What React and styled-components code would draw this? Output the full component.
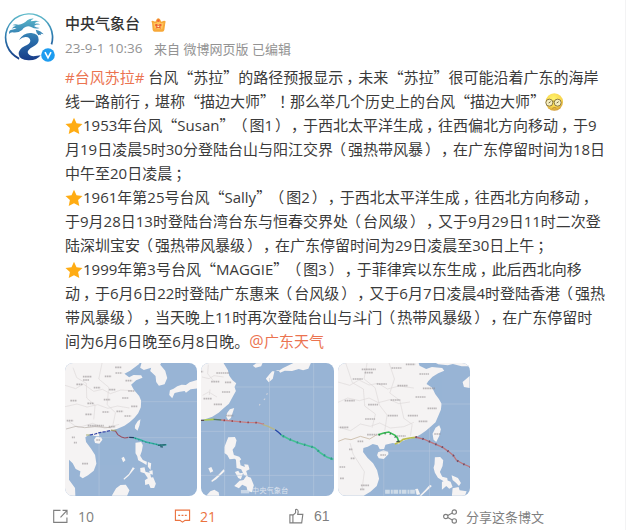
/* eslint-disable react/prop-types */
import styled, { createGlobalStyle } from "styled-components";

const lines = [
  "{#台风苏拉#} 台风“苏拉”的路径预报显示，未来“苏拉”很可能沿着广东的海岸",
  "线一路前行，堪称“描边大师”！那么举几个历史上的台风“描边大师”@",
  "*1953年台风“Susan”（图1），于西北太平洋生成，往西偏北方向移动，于9",
  "月19日凌晨5时30分登陆台山与阳江交界（强热带风暴），在广东停留时间为18日",
  "中午至20日凌晨；",
  "*1961年第25号台风“Sally”（图2），于西北太平洋生成，往西北方向移动，",
  "于9月28日13时登陆台湾台东与恒春交界处（台风级），又于9月29日11时二次登",
  "陆深圳宝安（强热带风暴级），在广东停留时间为29日凌晨至30日上午；",
  "*1999年第3号台风“MAGGIE”（图3），于菲律宾以东生成，此后西北向移",
  "动，于6月6日22时登陆广东惠来（台风级），又于6月7日凌晨4时登陆香港（强热",
  "带风暴级），当天晚上11时再次登陆台山与斗门（热带风暴级），在广东停留时",
  "间为6月6日晚至6月8日晚。{@广东天气}",
];

// where each half-width mark starts inside its 1em cell
const markIndent = { "，": 3, "；": 3, "！": 4, "（": 5.5, "）": 2 };

const Star = () => (
  <StarIcon viewBox="0 0 18 18">
    <path
      d="M9 .8l2.5 5.5 6 .7-4.4 4.1 1.2 6L9 14.2l-5.3 2.9 1.2-6L.5 7l6-.7z"
      fill="#ffac13"
    />
  </StarIcon>
);

const GlassesEmoji = () => (
  <Emoji viewBox="0 0 54 54">
    <defs>
      <radialGradient id="face" cx=".45" cy=".3" r=".75">
        <stop offset="0" stopColor="#fff36b" />
        <stop offset=".65" stopColor="#f8d44b" />
        <stop offset="1" stopColor="#c99032" />
      </radialGradient>
    </defs>
    <circle cx="28" cy="27" r="26" fill="url(#face)" />
    <g fill="#f6efc0" stroke="#7d6a35" strokeWidth="2.6">
      <circle cx="13" cy="29" r="10.5" />
      <circle cx="38" cy="29" r="10.5" />
    </g>
    <path d="M23 26q2-3 5 0" fill="none" stroke="#7d6a35" strokeWidth="2.6" />
    <path d="M11 30l6-4M35 30l6-4" stroke="#5d4c2c" strokeWidth="2.6" />
    <path d="M22 46q6-4 12-1" fill="none" stroke="#a87322" strokeWidth="2" />
  </Emoji>
);

// {..} is a link, * a star and @ at the end of a line the emoji
const renderLine = (line) =>
  line.split(/(\{.*?\}|[“”，；！（）]|^\*|@$)/).map((part, i) => {
    if (part === "“" || part === "”") return <Quote key={i}>{part}</Quote>;
    if (part in markIndent) return <Mark key={i} $indent={markIndent[part]}>{part}</Mark>;
    if (part === "*") return <Star key={i} />;
    if (part === "@") return <GlassesEmoji key={i} />;
    if (part.startsWith("{@")) return <Topic key={i}><At>@</At>{part.slice(2, -1)}</Topic>;
    if (part.startsWith("{")) return <Topic key={i}>{part.slice(1, -1)}</Topic>;
    return part;
  });

const Logo = () => (
  <AvatarIcon viewBox="12 15 156 156">
    <defs>
      <linearGradient id="sky" x1="0" y1="0" x2="0" y2="1">
        <stop offset="0" stopColor="#62bdcb" />
        <stop offset=".45" stopColor="#3080b2" />
        <stop offset="1" stopColor="#173d87" />
      </linearGradient>
      <linearGradient id="body" x1="0" y1="40" x2="0" y2="165" gradientUnits="userSpaceOnUse">
        <stop offset="0" stopColor="#58b4c7" />
        <stop offset=".5" stopColor="#2b72ae" />
        <stop offset="1" stopColor="#193c88" />
      </linearGradient>
    </defs>
    <path
      d="M57 164A73 73 0 1 1 157 119L152 117A68 68 0 1 0 58 158Z"
      fill="url(#sky)"
    />
    <g fill="url(#body)">
      <path d="M55 59q16-1 27-13 8-6 19-5-9 3-9 8 16-4 28 0-14 1-16 7 12-2 17 3-12-1-19 4 4 5 17 6-13 4-24-2-9-5-17-2-8 3-12 10-12 10-29 7-7 0-9 5-3-8 4-12 11-1 18-5-8-2-15 1 5-7 13-9-5-2-11-1 7-5 18-2z" />
      <path d="M57 105q14-23 37-21 23 2 22 21-1 13-17 20-15 8-16 16 1 10 17 13l22-3q-11 16-37 15-27-1-29-19 0-14 17-23 18-8 18-17-1-10-13-11-10-1-21 9z" />
      <path d="M107 74q17 4 24 14-11-4-20-2zM113 82q9 3 11 9-7-3-10 0z" />
    </g>
  </AvatarIcon>
);

const Crown = () => (
  <CrownIcon viewBox="0 0 45 42">
    <path
      d="M3 14Q-1 8 5 8l8 3 4-7q5-6 10 0l4 7 8-3q7 0 4 6l-3 22q-1 5-6 5H11q-5 0-6-5z"
      fill="#f7a838"
    />
    <path d="M7 14l9 2 6-9 7 9 9-2-4 20H11z" fill="#ffc45c" />
    <circle cx="22" cy="8" r="4" fill="#ef6537" />
    <path d="M12 21q0-4 5-3l5 3 5-3q5-1 5 3t-5 5l4 6-9-3-9 3 4-6q-5-1-5-5z" fill="#eb6034" />
    <path d="M18 23h8l-2 4h-4z" fill="#fff1bd" />
  </CrownIcon>
);

const Labels = ({ points }) => (
  <g stroke="#8b8588" strokeWidth="5" strokeDasharray="5 1.5" opacity=".55">
    {points.map(([x, y, w = 20]) => (
      <path key={`${x}-${y}`} d={`M${x - w / 2} ${y}h${w}`} />
    ))}
  </g>
);

const SusanMap = () => (
  <Photo viewBox="15 15 396 398" preserveAspectRatio="none">
    <path fill="#98b4d5" d="M0 0h430v430H0z" />
    <g fill="#f5f3f3">
      <path d="M0 0H248L236 19 210 38 193 47 207 58 220 51 243 52 247 59 228 67 213 80 221 95 237 114 243 128 242 148 234 166 223 179 209 192 193 203 172 212 153 218 132 222 116 225 118 235 104 234 89 229 76 238 78 252 93 272 105 291 109 317 101 338 84 352 68 361 59 355 61 340 47 333 38 316 27 305 27 365 45 390 46 413H0z" />
      <path d="M248 0H310L300 20 315 38 321 60 313 79 296 83 288 72 286 54 270 39 273 29 251 36 240 29z" />
      <path d="M410 66L388 73 377 81 364 80 351 85 340 92 329 97 327 111 336 121 343 105 359 101 373 99 377 104 391 94 411 91z" />
      <path d="M241 184L233 189 225 202 224 211 232 218 238 202zM108 236l15 1 4 8-9 12-13-2-3-10zM226 254l17-2 5 10-3 17-5 14 8 13 12 5-1 10-11-7-14-7-3-13-5-8zM240 330l13-2 3 13 14 4 4 22-12-8-9-13-12-4zM254 367l11-8 14-1 8 19-5 13-11 0-5-12-11 3zM218 328l6 3-18 22-14 12-2-3 16-14zM184 300l7-4 5 11-7 6zM155 413l13-22 13-10 16-1 11 17-7 16z" />
      <path d="M263 312l10 4-2 20-8-10zM267 339l10-2 1 13-9-3z" />
    </g>
    <g fill="none" stroke="#dedada" strokeWidth="2">
      <path d="M15 82l32 10 23-14 31 22 26-6 24 13 31-11 34 2M15 146l36-8 30 9 32-7 30 11 29-7 36 6M39 29l11 30 29 17 1 44 25 22-4 42M126 15l-10 48 30 25-5 52 25 24-9 44M25 190l29 19 44-13 36 15 43-12" />
    </g>
    <path d="M18 213l30-8 26 4 30-3 49 3" fill="none" stroke="#b5ada8" strokeWidth="2" />
    <g stroke="#b8c9df" strokeWidth="1.5"><path d="M117 259V413M245 131H411M117 239H411" /></g>
    <Labels points={[[82, 56, 27], [78, 66, 18], [144, 55], [175, 28], [176, 45], [206, 68], [59, 79], [111, 89], [157, 95], [214, 99], [41, 128], [92, 136], [141, 125], [196, 120], [223, 145], [86, 169], [137, 162], [179, 160], [203, 174], [30, 188], [107, 203, 48], [156, 206], [40, 238, 9], [46, 254, 9], [75, 317, 18], [115, 246, 13]]} />
    <g fill="none" strokeWidth="3.5">
      <path d="M89 231L105 228 118 224 136 221 154 217" stroke="#3546a6" strokeDasharray="10 3" />
      <path d="M154 217l12 2 7 11 11 7 10 3 11-2" stroke="#984f62" />
      <path d="M207 238l15 1" stroke="#223e62" />
      <path d="M221 239l21 7 18 7 21 4 18 5 20-2" stroke="#31b3a1" strokeWidth="4.5" />
      <path d="M225 241l23 9 27 6 31 6 13-2" stroke="#276978" strokeDasharray="2 9" />
      <path d="M293 262l24-2M300 266l8 1" stroke="#2b6272" strokeWidth="4" />
    </g>
    <path d="M78 231l11 0M152 217l17 0" stroke="#a7ae72" strokeWidth="3" />
  </Photo>
);

const SallyMap = () => (
  <Photo viewBox="12 15 398 398" preserveAspectRatio="none">
    <path fill="#98b4d5" d="M0 0h430v430H0z" />
    <g fill="#f5f3f3">
      <path d="M0 0H72L82 19 93 37 97 53 107 67 118 76 113 87 117 99 107 117 96 137 80 151 65 164 46 176 24 184 0 187z" />
      <path d="M168 23l10-7 19-1-4 10-17 4zM218 49l8-9 20-2 13-8 31-15 53-1-8 18-16 5-13-4-20 6-22-1-14 6-5-7-12 3-5 22-12 11-9-11z" />
      <path d="M112 150L99 154 91 164 87 175 94 186 102 180zM94 238l20-1 5 10-4 18-8 10 4 16 16 5 6 8-7 7-13-9-15 2-7-13-9-6 0-17zM117 304l12 6 2 12 13 5-2-8 12 1 4 14-10 5 5 17-12-5-8-17-14-4zM114 342l10-4 5 8 10-2-7 20-8-4zM112 384l16-16 12-2 8-12 14 5 9 23-6 21-13-4-3-13-13-6-10 11zM34 331l9-4 6 13-9 4zM80 334l4 5-26 25-13 8-2-4 23-19zM28 413l12-13 12-5 13 8 2 10z" />
    </g>
    <g stroke="#b8c9df" strokeWidth="1.7"><path d="M83 187V413M218 60V413M351 15V413M115 87H410M12 220H410M12 352H410" /></g>
    <path d="M15 57l21 5 15-9 29 4M34 20l-2 27 17 21M17 112l18-10 25 15M39 94l-2 17" fill="none" stroke="#dedada" strokeWidth="2" />
    <Labels points={[[78, 45, 40], [55, 71, 25], [94, 73], [88, 102, 26], [32, 122, 25], [63, 139, 25], [98, 173, 22], [15, 41, 7]]} />
    <g stroke="#d7d7dc" strokeWidth="3"><path d="M209 110l3-4M187 142l3-4M201 126l4-4" /></g>
    <g fill="none" strokeWidth="4">
      <path d="M12 187h10" stroke="#584b4d" />
      <path d="M22 186l30-2" stroke="#a8c84e" strokeWidth="5" />
      <path d="M50 184l24 2" stroke="#557d68" />
      <path d="M72 186l45 4 31 3 34 1 20 5" stroke="#c78084" />
      <path d="M80 187l37 3 31 3 34 1 18 5" stroke="#8d3d46" strokeDasharray="4 20" strokeWidth="5" />
      <path d="M198 200l16 5 20 10" stroke="#b7b788" />
      <path d="M235 215l10 8 9 8" stroke="#2446a8" />
      <path d="M253 231l23 12 30 12 28 8 20 6 18 16 20 13 18 6" stroke="#43c193" strokeWidth="5" />
      <path d="M258 234l18 9 30 12 28 8 20 6 18 16 20 13 18 6" stroke="#30958d" strokeDasharray="4 19" strokeWidth="7" />
    </g>
    <Watermark x="165" y="406" fontSize="22">中央气象台</Watermark>
    <path d="M132 401h25" stroke="#dae3ee" strokeWidth="10" opacity=".75" />
  </Photo>
);

const MaggieMap = () => (
  <Photo viewBox="15 15 396 398" preserveAspectRatio="none">
    <path fill="#98b4d5" d="M0 0h430v430H0z" />
    <g fill="#f5f3f3">
      <path d="M0 0H252L259 23 279 33 296 27 327 30 333 38 315 46 298 56 285 70 280 78 297 89 306 108 317 123 325 137 323 155 316 172 307 193 292 206 278 218 263 229 247 238 225 243 208 249 196 259 179 255 157 260 153 273 140 274 134 262 119 258 104 266 91 270 90 282 103 299 120 316 132 337 138 362 131 384 112 401 92 413H0z" />
      <path d="M308 15h103v10H385L359 18 344 22 315 19zM388 72l21-18v36l-17-3zM318 202l-11 7-9 18 3 18 8 7 9-18 5-20zM135 283l16-6 14 4 1 8-14 14-15-2-5-9zM305 298l16-1 9 10-2 17-8 18 7 14 15 4 2 14-14-5-16-10-9-15-4-15 3-10zM326 372l12-7 14 6 6 16-10 5-9-8-13 11zM290 380l6 4-31 29h-6l17-17zM246 393l8-1 7 17-10 2z" />
      <path d="M355 352l19 8 9 15-6 9-9-10-10-8zM358 391l18-4 3 10 21 3-5 13h-39z" />
    </g>
    <path d="M15 72l35 10 28-16 30 15 27-5 28 17 35-9 44 6M15 133l29-13 35 8 29-8 28 14 34-9 27 12 33-5M38 15l20 59 33 19 4 51 32 24-10 41M102 15l-9 48 33 26 13 52 23 30-7 47M168 15l16 48-14 42 30 22 12 54 25 18-5 34M15 207l38 11 29-20 30 7 28-10 31 15 41-4 30-13M51 255l9 33 34 53-7 52" fill="none" stroke="#dedada" strokeWidth="2" />
    <g stroke="#b8c9df" strokeWidth="1.5"><path d="M152 303V413M289 211V413M135 279H411M325 138H411" /></g>
    <Labels points={[[107, 34, 42], [107, 44, 25], [190, 30, 30], [232, 19, 28], [273, 48, 29], [74, 63, 30], [146, 78, 30], [208, 83, 30], [287, 91, 36], [50, 128, 30], [120, 140, 30], [187, 126, 29], [262, 117, 30], [297, 151, 28], [111, 183, 30], [179, 173, 30], [239, 173, 30], [270, 190, 27], [34, 208, 27], [121, 230, 38], [82, 250, 17], [53, 274, 10], [59, 301, 12], [28, 327, 17], [27, 361, 12], [96, 382, 25], [88, 394, 14], [150, 291, 17], [204, 234, 28], [313, 228, 20]]} />
    <path d="M16 250l20-8 18 3 28-10 28 8 21-13" fill="none" stroke="#c9b9a5" strokeWidth="2.5" />
    <g fill="none" strokeWidth="4">
      <path d="M135 230l17-5 15-3 19 10 7 8 3 9" stroke="#38bc56" strokeWidth="5" />
      <path d="M138 231l27-7 28 17 5 14" stroke="#2c6941" strokeDasharray="3 14" strokeWidth="5" />
      <path d="M185 258l15-6 10-8 20-4 17-2" stroke="#bbbd4e" strokeWidth="5" />
      <path d="M190 251l10-1" stroke="#405148" />
      <path d="M246 237l25 6 28 12 28 12 18 13 15 12 10 15 20 11 21 9" stroke="#bd737a" />
      <path d="M247 237l24 6 28 12 28 12 18 13 15 12 10 15 20 11 21 9" stroke="#6a4b65" strokeDasharray="4 17" strokeWidth="6" />
    </g>
    <path d="M156 401h96" stroke="#e6ebf0" strokeWidth="12" strokeDasharray="14 3 6 2" opacity=".7" />
  </Photo>
);

const Repost = () => (
  <ActionIcon viewBox="0 0 18 18">
    <path d="M9 2.5H1.8v12.7h14V10M9 10l6.7-7.3M11.2 2.5h4.7v4.7" />
  </ActionIcon>
);

const Comment = () => (
  <ActionIcon viewBox="0 0 18 18">
    <path d="M1.5 2.3h15v10.8h-4.8L9 15l-2.7-1.9H1.5zM4.5 7.8h2M8 7.8h2M11.5 7.8h2" />
  </ActionIcon>
);

const Like = () => (
  <ActionIcon viewBox="0 0 18 18">
    <path d="M2 7.3h3.2v8.5H2zM5.2 7.7L8 5.1V2.3q0-1 1-1 1.8.2 1.8 2.6l-.5 2.8h5.4l-1.2 9.1H5.2" />
  </ActionIcon>
);

const Share = () => (
  <ActionIcon viewBox="0 0 18 18">
    <circle cx="4" cy="9" r="2.3" />
    <circle cx="13" cy="4.3" r="2.3" />
    <circle cx="13" cy="13.7" r="2.3" />
    <path d="M6.1 8l4.8-2.6M6.1 10l4.8 2.6" />
  </ActionIcon>
);

const App = () => (
  <>
    <GlobalStyle />
    <Post>
      <Avatar>
        <Logo />
        <Verified viewBox="0 0 14 14">
          <circle cx="7" cy="7" r="6.8" fill="#1d9cf0" />
          <path d="M4 4.2l3 5.6 3-5.6" fill="none" stroke="#fff" strokeWidth="1.6" />
        </Verified>
      </Avatar>
      <Main>
        <NameRow>
          <Name>中央气象台</Name>
          <Crown />
        </NameRow>
        <Meta>
          <Time>23-9-1 10:36</Time>
          <span>来自</span>
          <span>微博网页版</span>
          <span>已编辑</span>
        </Meta>
        <Content>
          {lines.map((line) => (
            <Line key={line}>{renderLine(line)}</Line>
          ))}
        </Content>
        <Gallery>
          <SusanMap />
          <SallyMap />
          <MaggieMap />
        </Gallery>
      </Main>
      <Actions>
        <Action><Repost />10</Action>
        <Action $active><Comment />21</Action>
        <Action $plain><Like />61</Action>
        <Action><Share /><ShareText>分享这条博文</ShareText></Action>
      </Actions>
    </Post>
  </>
);

export default App;

const GlobalStyle = createGlobalStyle`
  * {
    box-sizing: border-box;
  }

  body {
    margin: 0;
    background: #fff;
    font-family: "Open Sans", "Noto Sans CJK SC", sans-serif;
    text-spacing-trim: space-all;
  }
`;

const Post = styled.article`
  width: 626px;
  height: 530px;
  display: grid;
  grid-template-columns: 61px 1fr;
  grid-template-rows: 496px 34px;
  border-right: 1px solid #f3f3f4;
  overflow: hidden;
`;

const Avatar = styled.div`
  position: relative;
  padding: 10px 0 0 4px;
`;

const AvatarIcon = styled.svg`
  display: block;
  width: 52px;
  height: 52px;
`;

const Verified = styled.svg`
  position: absolute;
  left: 41px;
  top: 48px;
  width: 14px;
  height: 14px;
`;

const Main = styled.div`
  padding: 12px 0 0 4px;
`;

const NameRow = styled.header`
  display: flex;
  align-items: center;
  height: 23px;
  gap: 11px;
`;

const Name = styled.strong`
  color: #333;
  font-size: 15px;
  line-height: 20px;
  font-weight: 500;
  margin-top: -1px;
`;

const CrownIcon = styled.svg`
  width: 15px;
  height: 14px;
  margin-top: 2px;
`;

const Meta = styled.div`
  display: flex;
  align-items: center;
  gap: 3.5px;
  height: 26px;
  color: #939393;
  font-size: 13px;
  white-space: nowrap;
`;

const Time = styled.time`
  width: 85.5px;
  font-size: 13.5px;
`;

const Content = styled.div`
  padding-top: 4px;
  color: #3a3a3a;
  font-size: 15px;
  line-height: 24px;
`;

const Line = styled.div`
  height: 24px;
  white-space: nowrap;
`;

const Quote = styled.span`
  font-family: "Noto Sans CJK SC", sans-serif;
`;

const Mark = styled.span`
  display: inline-block;
  width: 1em;
  padding-left: ${({ $indent }) => $indent}px;
  font-family: "Noto Sans CJK SC", sans-serif;
  font-feature-settings: "halt";
  line-height: 20px;
`;

const Topic = styled.a`
  color: #eb7350;
`;

const At = styled.span`
  font-size: 16px;
  line-height: 20px;
  letter-spacing: 0.4px;
`;

const StarIcon = styled.svg`
  width: 18px;
  height: 18px;
  vertical-align: -4px;
`;

const Emoji = styled.svg`
  width: 18px;
  height: 18px;
  vertical-align: -4px;
`;

const Gallery = styled.div`
  display: grid;
  grid-template-columns: repeat(3, 132.3px);
  gap: 4px;
  margin-top: 10px;
`;

const Photo = styled.svg`
  display: block;
  width: 132.3px;
  height: 132.7px;
  border-radius: 8px;
`;

const Watermark = styled.text`
  fill: #e6ebf2;
  font-family: "Noto Sans CJK SC", sans-serif;
  opacity: 0.85;
`;

const Actions = styled.footer`
  grid-column: 1 / -1;
  display: grid;
  grid-template-columns: 122px 114px 154px 1fr;
  padding-left: 52px;
  padding-top: 10px;
`;

const Action = styled.div`
  display: flex;
  align-items: center;
  gap: 9px;
  height: 20px;
  color: ${({ $active }) => ($active ? "#eb7340" : "#7f7f7f")};
  font-family: ${({ $plain }) =>
    $plain ? '"Liberation Sans", sans-serif' : '"Open Sans", "Noto Sans CJK SC", sans-serif'};
  font-size: 14px;
`;

const ActionIcon = styled.svg`
  width: 17px;
  height: 17px;
  fill: none;
  stroke: currentColor;
  stroke-width: 1.2;
`;

const ShareText = styled.span`
  font-size: 13px;
  margin-left: -2px;
`;
